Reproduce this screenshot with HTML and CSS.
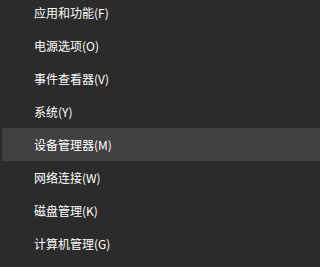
FILE: index.html
```html
<!DOCTYPE html>
<html lang="zh-CN">
<head>
<meta charset="utf-8">
<link rel="stylesheet" href="styles.css">
</head>
<body>
<ul class="menu">
  <li class="item">应用和功能(F)</li>
  <li class="item">电源选项(O)</li>
  <li class="item">事件查看器(V)</li>
  <li class="item">系统(Y)</li>
  <li class="item active">设备管理器(M)</li>
  <li class="item">网络连接(W)</li>
  <li class="item">磁盘管理(K)</li>
  <li class="item">计算机管理(G)</li>
</ul>
</body>
</html>
```

FILE: styles.css
```css
html, body {
  margin: 0;
  padding: 0;
  background: #2b2b2b;
  height: 267px;
  overflow: hidden;
}
.menu {
  list-style: none;
  margin: -4px 0 0 0;
  padding: 0;
  display: flex;
  flex-direction: column;
}
.item {
  height: 33px;
  display: flex;
  align-items: center;
  padding-left: 32px;
  margin-left: 2px;
  font-family: "Noto Sans CJK SC", "Noto Sans", sans-serif;
  font-size: 12px;
  color: #ffffff;
  white-space: nowrap;
}
.item.active {
  background: #414141;
}
```
